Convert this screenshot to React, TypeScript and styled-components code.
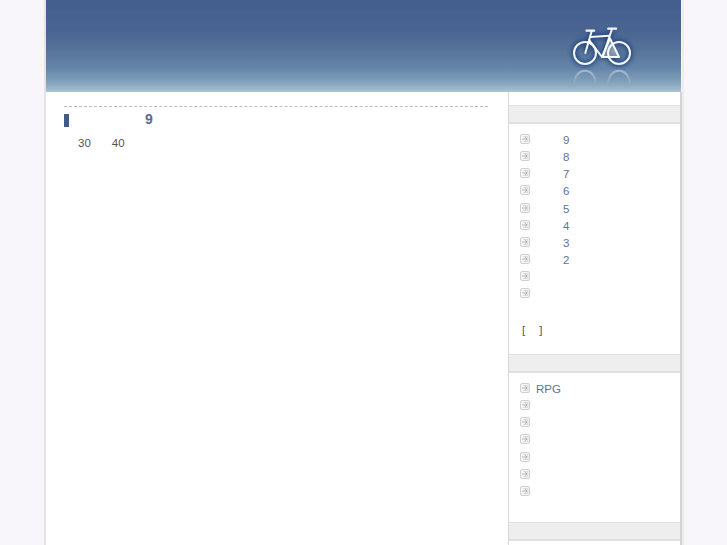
import React from "react";
import styled, { createGlobalStyle } from "styled-components";

const GlobalStyle = createGlobalStyle`
  html, body {
    margin: 0;
    padding: 0;
    height: 100%;
    overflow: hidden;
    background: #f8f5fb;
  }
  body {
    font-family: "Liberation Sans", Arial, sans-serif;
    font-size: 11.5px;
    color: #555555;
  }
`;

const Page = styled.div`
  width: 640px;
  height: 545px;
  margin-left: 44px;
  box-sizing: border-box;
  border-left: 2px solid #e4e4e4;
  border-right: 2px solid #ececec;
  overflow: hidden;
`;

const Header = styled.header`
  height: 92px;
  box-sizing: border-box;
  margin-right: 1px;
  padding: 15px 36px 0 0;
  display: flex;
  justify-content: flex-end;
  align-items: flex-start;
  background:
    repeating-linear-gradient(rgba(255, 255, 255, 0.008) 0 5px, rgba(0, 0, 0, 0.004) 5px 10px),
    linear-gradient(
      #435d8d 0%,
      #4a6592 35%,
      #567399 55%,
      #6686aa 75%,
      #83a3bc 90%,
      #a9c5d3 100%
    );
`;

const Body = styled.div`
  display: flex;
  background: #ffffff;
  height: 453px;
  border-right: 2px solid #d4d4d4;
`;

const Main = styled.main`
  flex: 1;
  padding: 14px 20px 0 18px;
`;

const Sidebar = styled.aside`
  width: 171px;
  flex-shrink: 0;
  border-left: 1px solid #d8d8d8;
  padding-top: 13px;
`;

const Title = styled.h2`
  margin: 0;
  border-top: 1px dashed #bdbdbd;
  height: 25px;
  box-sizing: border-box;
  display: flex;
  align-items: center;
  font-size: 14px;
  font-weight: bold;
  color: #566c90;
`;

const TitleBar = styled.span`
  width: 5px;
  height: 13px;
  margin-right: 76px;
  margin-top: 2px;
  background: #415a8c;
`;

const Lead = styled.p`
  margin: 4px 0 0 14px;
  line-height: 17px;
  display: flex;
  gap: 21px;
`;

const Heading = styled.div`
  height: 16px;
  background: #eeeeee;
  border-top: 1px solid #e2e2e2;
  border-bottom: 2px solid #e0e0e0;
`;

const List = styled.ul`
  list-style: none;
  margin: 0;
  padding: 7.5px 0 0 11px;
`;

const Item = styled.li`
  height: 17.15px;
  line-height: 17.15px;
  display: flex;
  align-items: center;
  color: #5f7394;
`;

const Bullet = styled.svg`
  width: 10px;
  height: 10px;
  flex-shrink: 0;
  margin-top: -2px;
`;

const ItemText = styled.span<{ $gap: number }>`
  margin-left: ${(p) => p.$gap}px;
  margin-top: 1px;
`;

const Brackets = styled.div`
  margin: 19.5px 0 0 13px;
  height: 17px;
  line-height: 17px;
  display: flex;
  gap: 14px;
`;

const Section = styled.section<{ $height: number }>`
  height: ${(p) => p.$height}px;
`;

const BulletIcon = () => (
  <Bullet viewBox="0 0 10 10">
    <rect x="0.5" y="0.5" width="9" height="9" rx="1.5" fill="#f6f6f6" stroke="#d0d0d0" />
    <path d="M2 5H7M5.2 3.2L7 5L5.2 6.8" fill="none" stroke="#a6a6a6" strokeWidth="0.8" />
    <path d="M3.2 2.5H7.8V7.5H3.2" fill="none" stroke="#c6c6c6" strokeWidth="0.6" />
  </Bullet>
);

const Bike = () => (
  <svg width="85" height="80" viewBox="0 0 255 240">
    <defs>
      <filter id="glow" x="-20%" y="-20%" width="140%" height="140%">
        <feGaussianBlur stdDeviation="7" />
      </filter>
      <linearGradient id="fade" x1="0" y1="165" x2="0" y2="208" gradientUnits="userSpaceOnUse">
        <stop offset="0" stopColor="#ffffff" stopOpacity="0.42" />
        <stop offset="1" stopColor="#ffffff" stopOpacity="0" />
      </linearGradient>
    </defs>
    <g filter="url(#glow)" opacity="0.8">
      <g fill="none" stroke="#1f3f7c" strokeWidth="16">
        <circle cx="75" cy="114" r="33" />
        <circle cx="177" cy="114" r="33" />
        <path d="M95 49L76 114M91 66L147 62M155 45L128 124H178" />
      </g>
    </g>
    <g fill="none" stroke="#ffffff" strokeLinecap="round" strokeLinejoin="round" strokeOpacity="0.95">
      <circle cx="75" cy="114" r="33" strokeWidth="6" />
      <circle cx="177" cy="114" r="33" strokeWidth="6" />
      <path d="M95 49L76 114" strokeWidth="6" />
      <path d="M80 47H102" strokeWidth="7" />
      <path d="M91 66L147 62" strokeWidth="6" />
      <path d="M88 76L126 126" strokeWidth="6" />
      <path d="M155 45L128 126" strokeWidth="6" />
      <path d="M145 41H168" strokeWidth="7" />
      <path d="M126 126H177L150 70Z" strokeWidth="6" fill="#ffffff" fillOpacity="0.35" />
    </g>
    <path
      d="M42 208C44 154 106 154 108 208M144 208C146 154 208 154 210 208"
      fill="none"
      stroke="url(#fade)"
      strokeWidth="6"
    />
  </svg>
);

const archives = ["9", "8", "7", "6", "5", "4", "3", "2", "", ""];
const genres = ["RPG", "", "", "", "", "", ""];

export default function App() {
  return (
    <Page>
      <GlobalStyle />
      <Header>
        <Bike />
      </Header>
      <Body>
        <Main>
          <Title>
            <TitleBar />9
          </Title>
          <Lead>
            <span>30</span>
            <span>40</span>
          </Lead>
        </Main>
        <Sidebar>
          <Heading />
          <Section $height={230}>
            <List>
              {archives.map((label, i) => (
                <Item key={i}>
                  <BulletIcon />
                  <ItemText $gap={33}>{label}</ItemText>
                </Item>
              ))}
            </List>
            <Brackets>
              <span>[</span>
              <span>]</span>
            </Brackets>
          </Section>
          <Heading />
          <Section $height={149}>
            <List>
              {genres.map((label, i) => (
                <Item key={i}>
                  <BulletIcon />
                  <ItemText $gap={6}>{label}</ItemText>
                </Item>
              ))}
            </List>
          </Section>
          <Heading />
        </Sidebar>
      </Body>
    </Page>
  );
}
